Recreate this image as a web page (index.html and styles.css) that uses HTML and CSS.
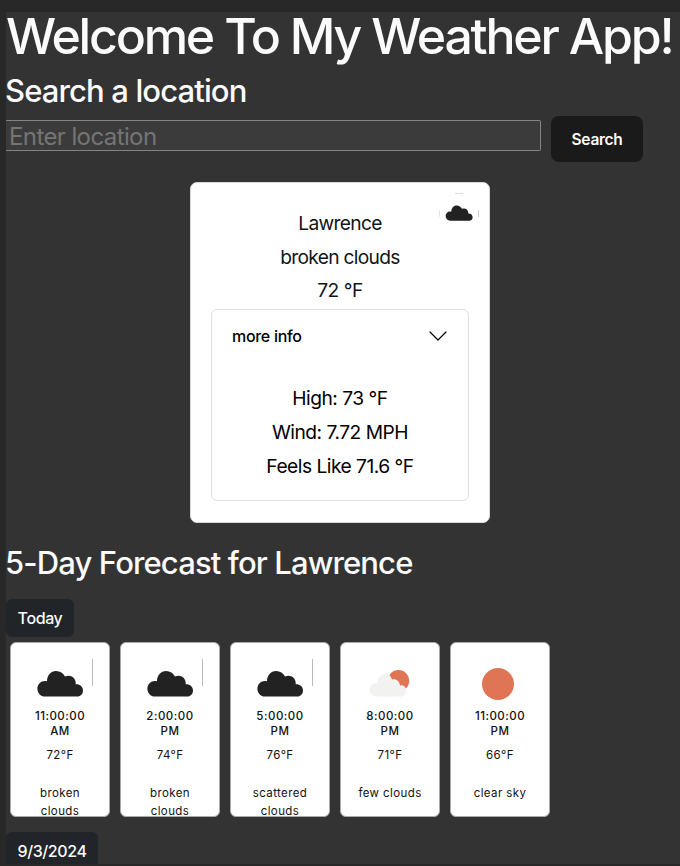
FILE: index.html
```html
<!DOCTYPE html>
<html lang="en">
<head>
<meta charset="utf-8">
<title>Weather App</title>
<link rel="stylesheet" href="styles.css">
</head>
<body>
<svg class="defs" aria-hidden="true">
  <symbol id="cloud" viewBox="0 0 46 27">
    <path d="M8 26.500C3.500 26.500.4 23 .4 18.700C.4 14.500 3.700 11.100 8 11.100C8.600 11.100 9.300 11.100 10 11.300C10 5.500 13.800 1 19 1C23.200 1 26.300 3.200 28 6.500C29 6 30.300 5.800 31.500 5.800C35.500 5.800 38.700 9 38.700 13.100V14.200C42.800 13.900 46 16.700 46 20.500C46 24 43.600 26.500 40.300 26.500Z"/>
  </symbol>
</svg>
<main class="app">
  <h1 class="title">Welcome To My Weather App!</h1>
  <h2 class="heading search-heading">Search a location</h2>
  <form class="search">
    <input class="search-input" type="text" placeholder="Enter location">
    <button class="search-button" type="button">Search</button>
  </form>
  <section class="current">
    <div class="current-icon"><i class="tick"></i><svg class="current-cloud"><use href="#cloud"/></svg></div>
    <p class="reading city">Lawrence</p>
    <p class="reading city">broken clouds</p>
    <p class="reading">72 °F</p>
    <div class="details">
      <div class="details-head">
        <span>more info</span>
        <svg class="chevron" viewBox="0 0 18 10"><path d="M1 1l8 8 8-8"/></svg>
      </div>
      <div class="details-body">
        <p class="reading">High: 73 °F</p>
        <p class="reading">Wind: 7.72 MPH</p>
        <p class="reading">Feels Like 71.6 °F</p>
      </div>
    </div>
  </section>
  <h2 class="heading forecast-heading">5-Day Forecast for Lawrence</h2>
  <div class="day">Today</div>
  <div class="hours">
    <article class="hour">
      <div class="hour-icon edge"><svg class="hour-cloud"><use href="#cloud"/></svg></div>
      <h3 class="time">11:00:00 AM</h3><p class="temp">72°F</p><p class="sky">broken clouds</p>
    </article>
    <article class="hour">
      <div class="hour-icon edge"><svg class="hour-cloud"><use href="#cloud"/></svg></div>
      <h3 class="time">2:00:00 PM</h3><p class="temp">74°F</p><p class="sky">broken clouds</p>
    </article>
    <article class="hour">
      <div class="hour-icon edge"><svg class="hour-cloud"><use href="#cloud"/></svg></div>
      <h3 class="time">5:00:00 PM</h3><p class="temp">76°F</p><p class="sky">scattered clouds</p>
    </article>
    <article class="hour">
      <div class="hour-icon"><svg class="partly" viewBox="0 0 40 27"><circle class="sun" cx="28.500" cy="10.800" r="10.700"/><path class="pale" d="M6.500 26.500A6.700 6.700 0 0 1 6.500 12.700L8 12.800C7.500 7.500 11 3.800 15.200 3.800C18.500 3.800 21 5.800 22 9.500C26 8.500 29.500 11 30 15.500C33.500 14.500 36.500 17.500 36.300 21C36.300 24 34 26.500 31 26.500Z"/></svg></div>
      <h3 class="time">8:00:00 PM</h3><p class="temp">71°F</p><p class="sky">few clouds</p>
    </article>
    <article class="hour">
      <div class="hour-icon"><svg class="clear" viewBox="0 0 32 32"><circle class="sun" cx="16" cy="16" r="16"/></svg></div>
      <h3 class="time">11:00:00 PM</h3><p class="temp">66°F</p><p class="sky">clear sky</p>
    </article>
  </div>
  <div class="day next">9/3/2024</div>
</main>
</body>
</html>
```
FILE: styles.css
```css
* { box-sizing: border-box; }
html, body { height: 866px; overflow: hidden; }
body {
  margin: 0;
  padding: 12px 0 2px 6px;
  background: #282828;
  color: #fbfbfb;
  font-family: Inter, "Liberation Sans", sans-serif;
}
h1, h2, h3, p { margin: 0; }
.defs { display: block; width: 0; height: 0; }
.app { height: 852px; background: #333; }
.title { font-size: 50px; line-height: 60px; height: 62px; font-weight: 500; letter-spacing: -2.200px; white-space: nowrap; margin: 0 0 -6px; position: relative; top: -6px; }
.heading { font-size: 31px; font-weight: 500; line-height: 38px; letter-spacing: -0.870px; white-space: nowrap; margin-left: -1px; }
.search-heading { margin-top: 4px; }
.search { display: flex; gap: 10px; margin-top: 6px; }
.search-input {
  width: 535px; height: 31px; margin: 4px 0 0; padding: 1px 4px 0 3px;
  border: 1px solid #858585; border-left: 0; border-radius: 0 2px 2px 0; background: #3b3b3b;
  color: #fff; font: 400 24px/28px Inter, sans-serif; letter-spacing: -0.600px;
}
.search-input::placeholder { color: #757575; opacity: 1; }
.search-button {
  width: 92px; height: 46px; border: 0; padding: 2px 0 0; border-radius: 8px;
  background: #1a1a1a; color: #fff; font: 600 15.500px/20px Inter, sans-serif; letter-spacing: -0.300px;
}
.current {
  position: relative; width: 300px; height: 341px; margin: 20px 0 0 184px; padding: 24px 21px 0;
  background: #fff; border: 1px solid #d6d8da; border-radius: 7px; color: #111417;
}
.reading { text-align: center; font-size: 19.200px; line-height: 33.700px; letter-spacing: -0.500px; }
.city { letter-spacing: -0.700px; }
.current-icon { position: absolute; top: 10px; right: 10px; width: 40px; height: 40px; }
.current-icon::before, .current-icon::after { content: ""; position: absolute; top: 17px; width: 1px; height: 7px; background: #ccc; }
.current-icon::before { left: 0; background: #e5e5e5; }
.current-icon::after { right: 0; }
.tick { position: absolute; left: 16px; top: 0; width: 8px; height: 1px; background: #ddd; }
.current-cloud { position: absolute; left: 6px; top: 12px; width: 28px; height: 16px; fill: #222; }
.details { height: 192px; margin: 1px -1px 0; border: 1px solid #dee2e6; border-radius: 6px; color: #000; }
.details-head { display: flex; justify-content: space-between; align-items: center; height: 52px; padding: 0 21px 0 20px; font-size: 16px; letter-spacing: -0.300px; font-weight: 500; }
.chevron { width: 18px; height: 10px; fill: none; stroke: #000; stroke-width: 1.200; stroke-linecap: round; stroke-linejoin: round; }
.details-body { padding-top: 20px; }
.forecast-heading { margin-top: 21px; }
.day {
  width: 68px; height: 38px; margin-top: 17px; border-radius: 6px; background: #212529;
  text-align: center; font-size: 16px; line-height: 38px; letter-spacing: -0.400px; font-weight: 500;
}
.hours { display: flex; gap: 10px; margin: 5px 0 0 4px; }
.hour {
  width: 100px; height: 175px; overflow: hidden; padding-top: 16px; text-align: center;
  background: #fff; border: 1px solid #aaa; border-radius: 6px; color: #111; font-size: 11.500px; letter-spacing: 0.400px;
}
.hour-icon { position: relative; width: 66px; height: 50px; margin: 0 auto; }
.edge { border-right: 1px solid transparent; border-image: linear-gradient(#bbb 27px, transparent 27px) 1; }
.hour-cloud { position: absolute; left: 10px; top: 11px; width: 46px; height: 27px; fill: #222; }
.partly { position: absolute; left: 13px; top: 11px; width: 40px; height: 27px; }
.clear { position: absolute; left: 15px; top: 9px; width: 32px; height: 32px; }
.sun { fill: #df7555; }
.pale { fill: #f2f2f0; }
.time { width: 66px; margin: 0 auto; font-size: 11.500px; line-height: 14.500px; font-weight: 500; letter-spacing: 0.500px; }
.temp { margin-top: 8px; line-height: 18px; }
.sky { width: 66px; margin: 20px auto 0; line-height: 18px; }
.next { width: 92px; height: 32px; margin-top: 15px; border-radius: 6px 6px 0 0; }
```
